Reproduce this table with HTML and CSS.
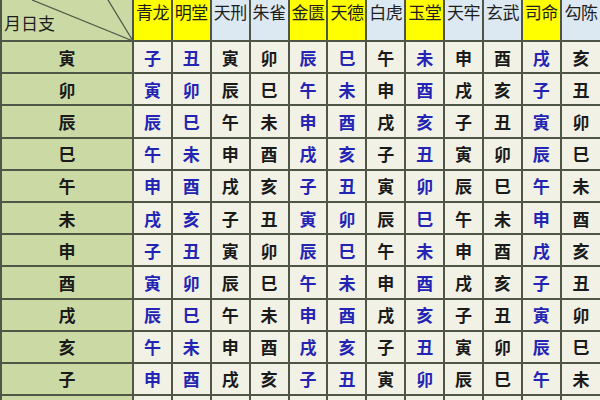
FILE: index.html
```html
<!DOCTYPE html>
<html lang="zh">
<head>
<meta charset="utf-8">
<link rel="stylesheet" href="styles.css">
</head>
<body>
<div class="sheet">
  <div class="hd corner"><span class="corner-label">月日支</span><svg class="diag" width="140" height="42" viewBox="0 0 140 42"><line x1="30" y1="0" x2="131" y2="41"/><line x1="106" y1="0" x2="131" y2="41"/></svg></div>
  <div class="hd y">青龙</div><div class="hd y">明堂</div><div class="hd">天刑</div><div class="hd">朱雀</div><div class="hd y">金匮</div><div class="hd y">天德</div><div class="hd">白虎</div><div class="hd y">玉堂</div><div class="hd">天牢</div><div class="hd">玄武</div><div class="hd y">司命</div><div class="hd">勾陈</div>

  <div class="rh">寅</div><div class="c b">子</div><div class="c b">丑</div><div class="c">寅</div><div class="c">卯</div><div class="c b">辰</div><div class="c b">巳</div><div class="c">午</div><div class="c b">未</div><div class="c">申</div><div class="c">酉</div><div class="c b">戌</div><div class="c">亥</div>
  <div class="rh">卯</div><div class="c b">寅</div><div class="c b">卯</div><div class="c">辰</div><div class="c">巳</div><div class="c b">午</div><div class="c b">未</div><div class="c">申</div><div class="c b">酉</div><div class="c">戌</div><div class="c">亥</div><div class="c b">子</div><div class="c">丑</div>
  <div class="rh">辰</div><div class="c b">辰</div><div class="c b">巳</div><div class="c">午</div><div class="c">未</div><div class="c b">申</div><div class="c b">酉</div><div class="c">戌</div><div class="c b">亥</div><div class="c">子</div><div class="c">丑</div><div class="c b">寅</div><div class="c">卯</div>
  <div class="rh">巳</div><div class="c b">午</div><div class="c b">未</div><div class="c">申</div><div class="c">酉</div><div class="c b">戌</div><div class="c b">亥</div><div class="c">子</div><div class="c b">丑</div><div class="c">寅</div><div class="c">卯</div><div class="c b">辰</div><div class="c">巳</div>
  <div class="rh">午</div><div class="c b">申</div><div class="c b">酉</div><div class="c">戌</div><div class="c">亥</div><div class="c b">子</div><div class="c b">丑</div><div class="c">寅</div><div class="c b">卯</div><div class="c">辰</div><div class="c">巳</div><div class="c b">午</div><div class="c">未</div>
  <div class="rh">未</div><div class="c b">戌</div><div class="c b">亥</div><div class="c">子</div><div class="c">丑</div><div class="c b">寅</div><div class="c b">卯</div><div class="c">辰</div><div class="c b">巳</div><div class="c">午</div><div class="c">未</div><div class="c b">申</div><div class="c">酉</div>
  <div class="rh">申</div><div class="c b">子</div><div class="c b">丑</div><div class="c">寅</div><div class="c">卯</div><div class="c b">辰</div><div class="c b">巳</div><div class="c">午</div><div class="c b">未</div><div class="c">申</div><div class="c">酉</div><div class="c b">戌</div><div class="c">亥</div>
  <div class="rh">酉</div><div class="c b">寅</div><div class="c b">卯</div><div class="c">辰</div><div class="c">巳</div><div class="c b">午</div><div class="c b">未</div><div class="c">申</div><div class="c b">酉</div><div class="c">戌</div><div class="c">亥</div><div class="c b">子</div><div class="c">丑</div>
  <div class="rh">戌</div><div class="c b">辰</div><div class="c b">巳</div><div class="c">午</div><div class="c">未</div><div class="c b">申</div><div class="c b">酉</div><div class="c">戌</div><div class="c b">亥</div><div class="c">子</div><div class="c">丑</div><div class="c b">寅</div><div class="c">卯</div>
  <div class="rh">亥</div><div class="c b">午</div><div class="c b">未</div><div class="c">申</div><div class="c">酉</div><div class="c b">戌</div><div class="c b">亥</div><div class="c">子</div><div class="c b">丑</div><div class="c">寅</div><div class="c">卯</div><div class="c b">辰</div><div class="c">巳</div>
  <div class="rh">子</div><div class="c b">申</div><div class="c b">酉</div><div class="c">戌</div><div class="c">亥</div><div class="c b">子</div><div class="c b">丑</div><div class="c">寅</div><div class="c b">卯</div><div class="c">辰</div><div class="c">巳</div><div class="c b">午</div><div class="c">未</div>
  <div class="rh"></div><div class="c"></div><div class="c"></div><div class="c"></div><div class="c"></div><div class="c"></div><div class="c"></div><div class="c"></div><div class="c"></div><div class="c"></div><div class="c"></div><div class="c"></div><div class="c"></div>
</div>
</body>
</html>
```

FILE: styles.css
```css
html, body {
  margin: 0;
  padding: 0;
  width: 600px;
  height: 400px;
  overflow: hidden;
  background: #f1f1e6;
}
.sheet {
  box-sizing: border-box;
  display: grid;
  grid-template-columns: 130px repeat(11, 36.9px) 1fr;
  grid-template-rows: 40px repeat(11, 30.2px) 4px;
  gap: 2px;
  padding-left: 2px;
  background: #4f5646;
  width: 600px;
  height: 400px;
  overflow: hidden;
  font-family: "Noto Sans CJK SC", "Noto Sans", sans-serif;
}
.hd {
  background: #dce9f3;
  color: #1e1e1e;
  font-size: 17px;
  line-height: 24px;
  text-align: center;
  white-space: nowrap;
  overflow: hidden;
  letter-spacing: -0.5px;
}
.hd.y {
  background: #ffff00;
}
.corner {
  position: relative;
  background: #cbdaa4;
  overflow: visible;
  text-align: left;
}
.corner-label {
  position: absolute;
  left: 2px;
  top: 11px;
  letter-spacing: 0;
}
.diag {
  position: absolute;
  left: 0;
  top: 0;
  overflow: visible;
}
.diag line {
  stroke: #4f5646;
  stroke-width: 1.3;
}
.rh {
  background: #cbdaa4;
  color: #1a1a1a;
  font-size: 17px;
  font-weight: bold;
  display: flex;
  align-items: center;
  justify-content: center;
}
.c {
  background: #f1f1e6;
  color: #1a1a1a;
  font-size: 17px;
  font-weight: bold;
  display: flex;
  align-items: center;
  justify-content: center;
}
.c.b {
  color: #2424b4;
}
```
